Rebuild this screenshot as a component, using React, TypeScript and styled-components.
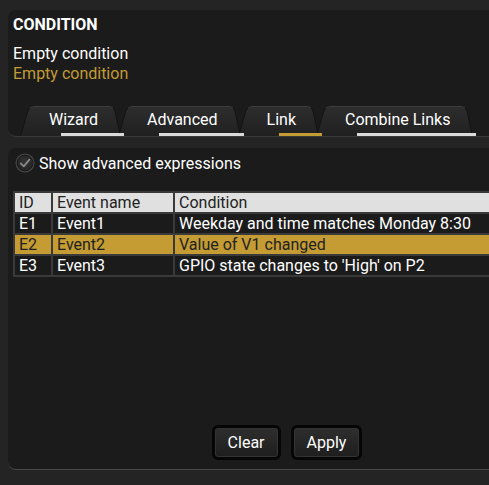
import React from "react";
import styled, { createGlobalStyle } from "styled-components";

const GlobalStyle = createGlobalStyle`
  html, body { margin: 0; padding: 0; background: #242424; overflow: hidden; }
  body { font-family: Roboto, "Liberation Sans", sans-serif; font-size: 16px; color: #fff; }
  * { box-sizing: border-box; }
`;

const Page = styled.div`
  display: flex;
  flex-direction: column;
  gap: 11px;
  padding: 10px 0 0 8px;
  width: 568px;
`;

const TopPanel = styled.section`
  background: #1b1b1b;
  border-radius: 8px 0 0 8px;
  border-bottom: 1px solid #3a3a3a;
  padding-top: 5px;
  display: flex;
  flex-direction: column;
`;

const Title = styled.div`
  font-weight: 700;
  line-height: 20px;
  padding-left: 5px;
`;

const Info = styled.div`
  margin-top: 9px;
  padding-left: 5px;
  display: flex;
  flex-direction: column;
`;

const InfoLine = styled.div<{ $gold?: boolean }>`
  line-height: 20px;
  color: ${(p) => (p.$gold ? "#c49c33" : "#ffffff")};
`;

const TabBar = styled.div`
  margin-top: 22px;
  display: flex;
  padding-left: 12px;
  height: 30px;
`;

const Tab = styled.div`
  position: relative;
  height: 30px;
  padding: 0 23px 4px 29px;
  margin-right: -3px;
  display: flex;
  align-items: center;
  color: #fff;
  cursor: pointer;

  &::before,
  &::after {
    content: "";
    position: absolute;
    top: 0;
    bottom: 0;
    width: 60%;
    background: linear-gradient(#2d2d2d, #202020);
    border-top: 1px solid #3d3d3d;
  }
  &::before {
    left: 0;
    transform-origin: bottom left;
    transform: skewX(-16deg);
    border-left: 1px solid #111;
    border-top-left-radius: 6px;
  }
  &::after {
    right: 0;
    transform-origin: bottom right;
    transform: skewX(12deg);
    border-right: 1px solid #111;
    border-top-right-radius: 6px;
  }
`;

const TabLabel = styled.span`
  position: relative;
  z-index: 1;
`;

const TabUnderline = styled.span<{ $active?: boolean }>`
  position: absolute;
  left: 41px;
  right: -3px;
  bottom: 0;
  height: 3px;
  z-index: 2;
  background: ${(p) => (p.$active ? "#c49c33" : "#d9d9d9")};
`;

const BottomPanel = styled.section`
  background: #1b1b1b;
  border-radius: 8px 0 0 8px;
  border-bottom: 1px solid #4a4a4a;
  height: 322px;
  padding: 5px 0 9px 5px;
  display: flex;
  flex-direction: column;
`;

const CheckRow = styled.label`
  display: flex;
  align-items: center;
  gap: 4px;
  height: 20px;
  padding-left: 2px;
  cursor: pointer;
`;

const Table = styled.table`
  margin-top: 18px;
  border-collapse: separate;
  border-spacing: 2px;
  background: #3a3a3a;
  table-layout: fixed;
  width: 555px;
`;

const HeadCell = styled.th<{ $w?: number }>`
  width: ${(p) => (p.$w ? `${p.$w}px` : "auto")};
  height: 19px;
  padding: 0 0 0 4px;
  background: #e0e0e0;
  color: #222;
  font-weight: 400;
  text-align: left;
  line-height: 19px;
  white-space: nowrap;
  font-size: 16px;
`;

const Cell = styled.td<{ $sel?: boolean }>`
  height: 19px;
  padding: 0 0 0 4px;
  background: ${(p) => (p.$sel ? "#c49c33" : "#1b1b1b")};
  color: ${(p) => (p.$sel ? "#222" : "#fff")};
  line-height: 19px;
  white-space: nowrap;
  font-size: 16px;
`;

const ButtonRow = styled.div`
  margin-top: auto;
  display: flex;
  justify-content: center;
  gap: 10px;
  padding-right: 7px;
`;

const Button = styled.button`
  height: 35px;
  padding: 0 13px;
  border: 3px solid #060606;
  border-radius: 6px;
  background: linear-gradient(#2e2e2e, #1e1e1e);
  box-shadow: inset 0 0 0 1px #333;
  color: #fff;
  font-family: Roboto, "Liberation Sans", sans-serif;
  font-size: 16px;
  cursor: pointer;
`;

const CheckIcon = () => (
  <svg width="20" height="20" viewBox="0 0 20 20">
    <defs>
      <radialGradient id="cg" cx="50%" cy="40%" r="60%">
        <stop offset="0%" stopColor="#333" />
        <stop offset="100%" stopColor="#232323" />
      </radialGradient>
    </defs>
    <circle cx="10" cy="10" r="9.5" fill="#4a4a4a" />
    <circle cx="10" cy="10" r="8" fill="url(#cg)" stroke="#1a1a1a" strokeWidth="1" />
    <path d="M5.8 10.4 L8.8 13.4 L14.4 6.6" fill="none" stroke="#8a8a8a" strokeWidth="1.8" strokeLinecap="round" strokeLinejoin="round" />
  </svg>
);

const tabs = [
  { name: "Wizard", active: false },
  { name: "Advanced", active: false },
  { name: "Link", active: true },
  { name: "Combine Links", active: false },
];

const rows = [
  { id: "E1", name: "Event1", cond: "Weekday and time matches Monday 8:30", sel: false },
  { id: "E2", name: "Event2", cond: "Value of V1 changed", sel: true },
  { id: "E3", name: "Event3", cond: "GPIO state changes to 'High' on P2", sel: false },
];

export default function App() {
  return (
    <>
      <GlobalStyle />
      <Page>
        <TopPanel>
          <Title>CONDITION</Title>
          <Info>
            <InfoLine>Empty condition</InfoLine>
            <InfoLine $gold>Empty condition</InfoLine>
          </Info>
          <TabBar>
            {tabs.map((t) => (
              <Tab key={t.name}>
                <TabLabel>{t.name}</TabLabel>
                <TabUnderline $active={t.active} />
              </Tab>
            ))}
          </TabBar>
        </TopPanel>
        <BottomPanel>
          <CheckRow>
            <CheckIcon />
            Show advanced expressions
          </CheckRow>
          <Table>
            <thead>
              <tr>
                <HeadCell $w={36}>ID</HeadCell>
                <HeadCell $w={120}>Event name</HeadCell>
                <HeadCell>Condition</HeadCell>
              </tr>
            </thead>
            <tbody>
              {rows.map((r) => (
                <tr key={r.id}>
                  <Cell $sel={r.sel}>{r.id}</Cell>
                  <Cell $sel={r.sel}>{r.name}</Cell>
                  <Cell $sel={r.sel}>{r.cond}</Cell>
                </tr>
              ))}
            </tbody>
          </Table>
          <ButtonRow>
            <Button>Clear</Button>
            <Button>Apply</Button>
          </ButtonRow>
        </BottomPanel>
      </Page>
    </>
  );
}
